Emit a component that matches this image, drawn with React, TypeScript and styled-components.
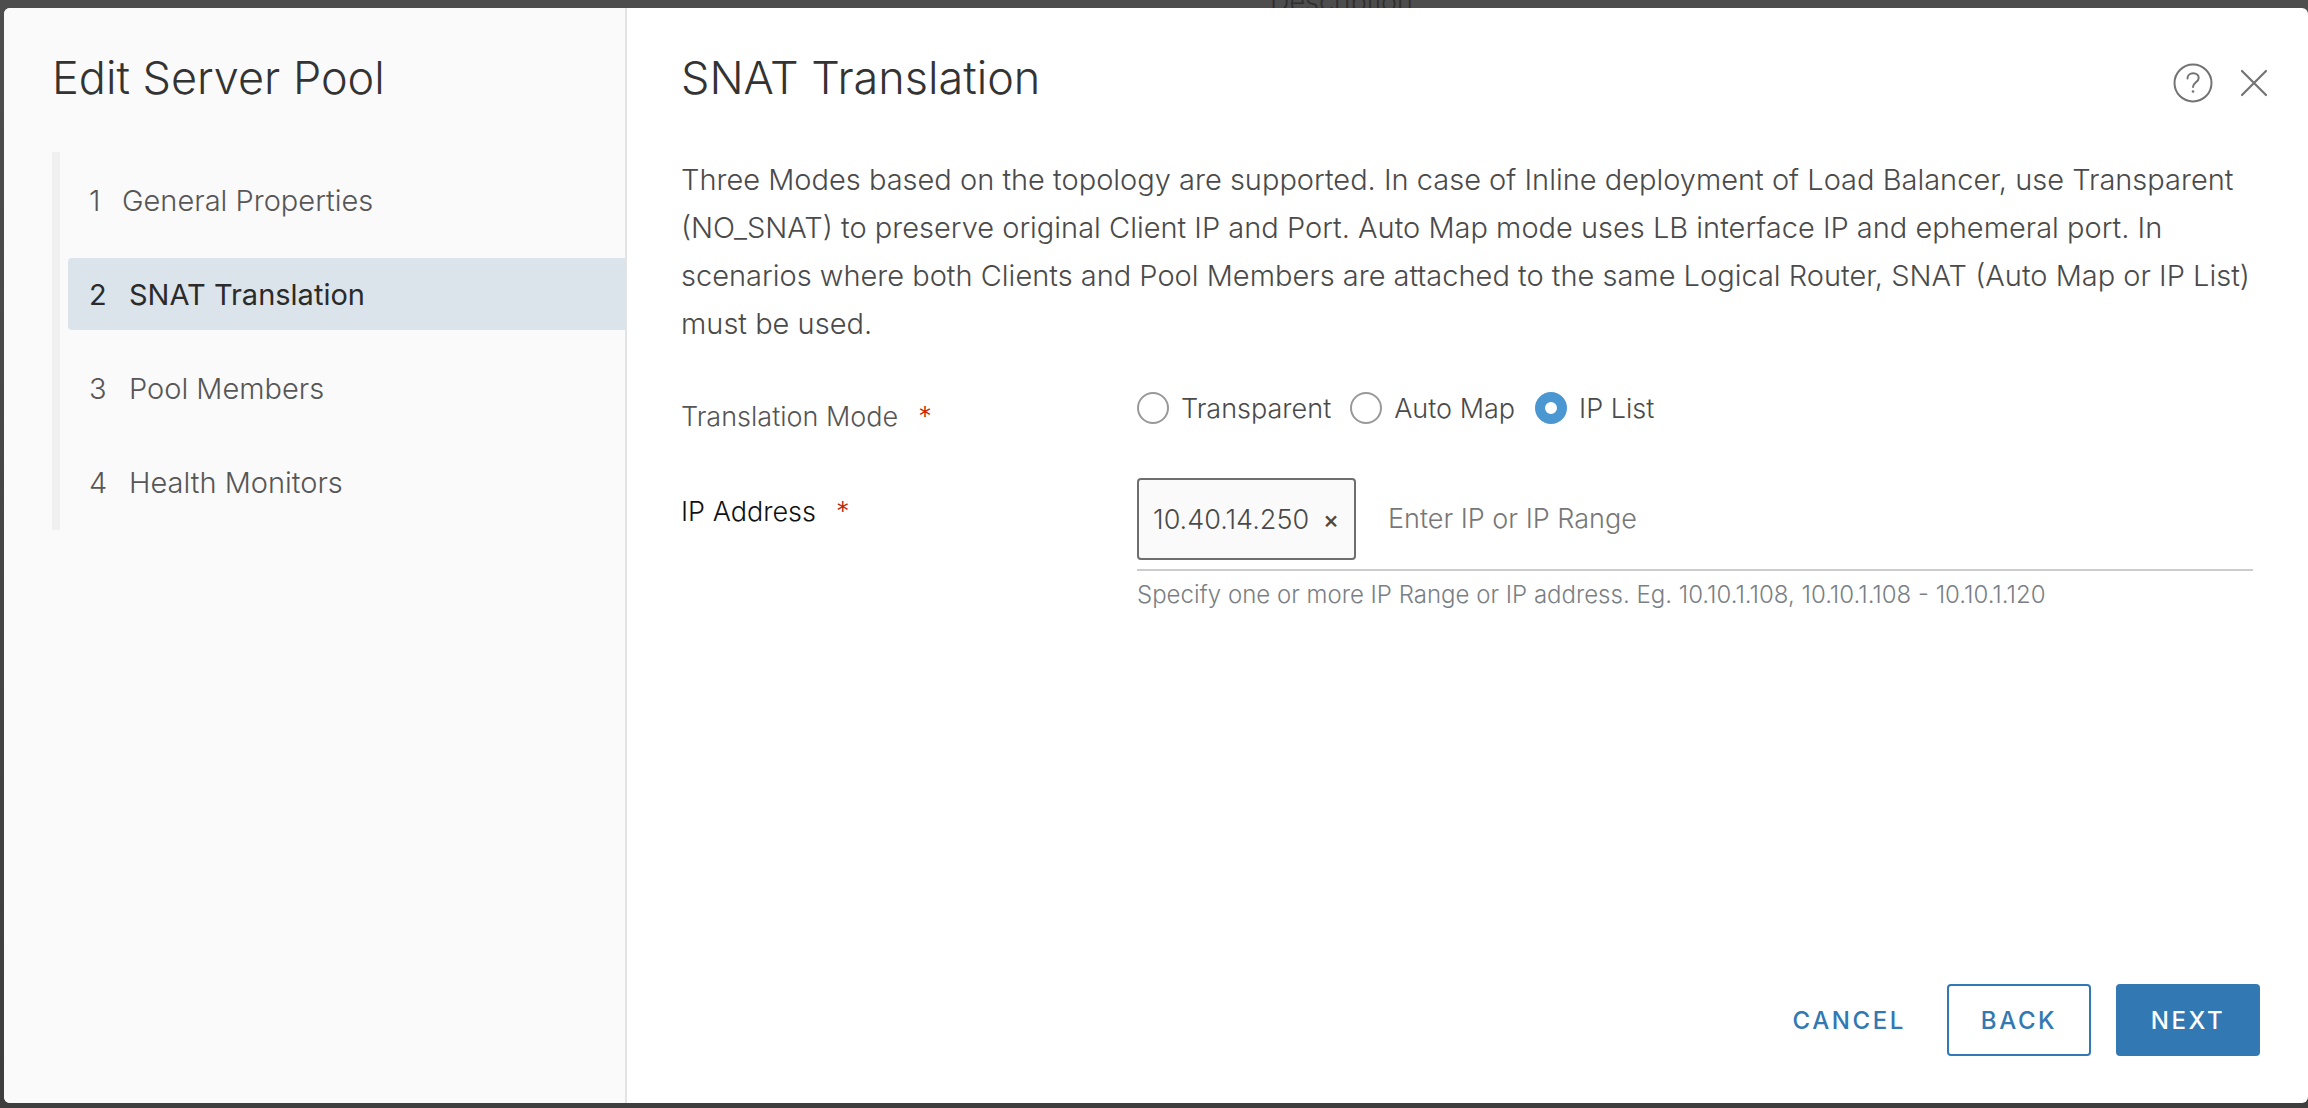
import styled, { createGlobalStyle } from 'styled-components';

const GlobalStyle = createGlobalStyle`
  html, body {
    margin: 0;
    padding: 0;
    height: 1108px;
    overflow: hidden;
    background: #444;
    font-family: Inter, "Liberation Sans", sans-serif;
  }
`;

const Backdrop = styled.div`
  position: relative;
  box-sizing: border-box;
  height: 1108px;
  padding: 8px 0 5px 4px;
  display: flex;
  background: linear-gradient(#4d4d4d, #3e3e3e);
  overflow: hidden;
`;

const GhostLabel = styled.span`
  position: absolute;
  left: 1270px;
  top: -15px;
  font-size: 27px;
  font-weight: 300;
  color: #2f2f2f;
`;

const Dialog = styled.div`
  position: relative;
  flex: 1;
  display: flex;
  background: #fff;
  border-radius: 6px;
  overflow: hidden;
`;

const Sidebar = styled.aside`
  flex: 0 0 623px;
  box-sizing: border-box;
  background: #fafafa;
  border-right: 2px solid #e3e3e3;
  padding: 46px 0 0 48px;
`;

const DialogTitle = styled.h1`
  margin: 0 0 50px;
  font-size: 45px;
  line-height: 48px;
  font-weight: 300;
  color: #333;
`;

const StepList = styled.ol`
  list-style: none;
  margin: 0;
  padding: 12px 0;
  border-left: 8px solid #f0f0f0;
  display: flex;
  flex-direction: column;
  gap: 22px;
`;

const Step = styled.li<{ $active?: boolean }>`
  height: 72px;
  margin-left: 8px;
  padding-left: 21px;
  display: flex;
  align-items: center;
  font-size: 29px;
  font-weight: ${(p) => (p.$active ? 400 : 300)};
  color: ${(p) => (p.$active ? '#2b2b2b' : '#565656')};
  background: ${(p) => (p.$active ? '#dbe4ea' : 'transparent')};
  border-radius: 4px 0 0 4px;
`;

const StepNumber = styled.span<{ $narrow?: boolean }>`
  width: ${(p) => (p.$narrow ? 33 : 40)}px;
`;

const Main = styled.main`
  flex: 1;
  display: flex;
  flex-direction: column;
  padding: 46px 48px 47px 54px;
  min-width: 0;
`;

const HeaderRow = styled.header`
  display: flex;
  align-items: flex-start;
  justify-content: space-between;
`;

const Heading = styled.h2`
  margin: 0;
  font-size: 45px;
  line-height: 48px;
  font-weight: 300;
  color: #333;
`;

const HeaderIcons = styled.div`
  display: flex;
  align-items: center;
  gap: 27px;
  margin: 9px -8px 0 0;
`;

const Description = styled.p`
  margin: 53px 0 0;
  font-size: 29px;
  line-height: 48px;
  font-weight: 300;
  color: #4a4a4a;
  width: 1572px;
`;

const FormRow = styled.div`
  display: grid;
  grid-template-columns: 456px 1116px;
`;

const ModeRow = styled(FormRow)`
  margin-top: 44px;
`;

const AddressRow = styled(FormRow)`
  margin-top: 45px;
`;

const FieldLabel = styled.label<{ $strong?: boolean; $offset: number }>`
  padding-top: ${(p) => p.$offset}px;
  font-size: 27px;
  font-weight: 300;
  line-height: 32px;
  color: ${(p) => (p.$strong ? '#111' : '#555')};
`;

const Required = styled.span`
  margin-left: 20px;
  color: #c92100;
`;

const RadioGroup = styled.div`
  display: flex;
  align-items: center;
  height: 32px;
`;

const RadioOption = styled.span<{ $gap: number }>`
  display: inline-flex;
  align-items: center;
  gap: 12px;
  margin-right: ${(p) => p.$gap}px;
  font-size: 27px;
  font-weight: 300;
  color: #4a4a4a;
`;

const RadioDot = styled.span<{ $checked?: boolean }>`
  box-sizing: border-box;
  width: 32px;
  height: 32px;
  border-radius: 50%;
  background: #fff;
  border: ${(p) => (p.$checked ? '10px solid #4b97d1' : '2px solid #999')};
`;

const AddressField = styled.div`
  display: flex;
  align-items: flex-start;
  gap: 32px;
  height: 93px;
  box-sizing: border-box;
  border-bottom: 2px solid #ccc;
`;

const Chip = styled.div`
  box-sizing: border-box;
  width: 219px;
  height: 82px;
  padding-left: 14px;
  display: flex;
  align-items: center;
  gap: 14px;
  background: #fafafa;
  border: 2px solid #6e6e6e;
  border-radius: 4px;
  font-size: 27px;
  font-weight: 300;
  color: #4a4a4a;
`;

const ChipClose = styled.span`
  font-size: 24px;
  font-weight: 500;
`;

const Placeholder = styled.span`
  margin-top: 24px;
  font-size: 27px;
  font-weight: 300;
  line-height: 34px;
  color: #777;
`;

const HelperText = styled.div`
  margin-top: 10px;
  font-size: 24px;
  font-weight: 300;
  line-height: 28px;
  color: #7a7f85;
`;

const Footer = styled.footer`
  margin-top: auto;
  display: flex;
  align-items: center;
  justify-content: flex-end;
  gap: 25px;
`;

const ActionButton = styled.button<{ $kind: 'link' | 'outline' | 'solid' }>`
  box-sizing: border-box;
  width: ${(p) => (p.$kind === 'link' ? 'auto' : '144px')};
  height: 72px;
  padding: 0;
  margin-right: ${(p) => (p.$kind === 'link' ? '16px' : 0)};
  font-family: inherit;
  font-size: 24px;
  font-weight: 500;
  letter-spacing: 2.6px;
  border-radius: 4px;
  border: ${(p) => (p.$kind === 'link' ? 'none' : '2px solid #3278b2')};
  color: ${(p) => (p.$kind === 'solid' ? '#fff' : '#3278b2')};
  background: ${(p) => (p.$kind === 'solid' ? '#3278b2' : 'transparent')};
`;

const HelpIcon = () => (
  <svg width="40" height="40" viewBox="0 0 40 40" fill="none" stroke="#737373" strokeWidth="2" strokeLinecap="round">
    <circle cx="20" cy="20" r="18.5" />
    <path d="M14.5 15.5c0-3.2 2.5-5.2 5.7-5.2 3.100 0 5.500 1.900 5.500 4.700 0 4.400-5.700 4.300-5.700 9" />
    <circle cx="20" cy="28.500" r="1.300" fill="#737373" stroke="none" />
  </svg>
);

const CloseIcon = () => (
  <svg width="28" height="28" viewBox="0 0 28 28" fill="none" stroke="#737373" strokeWidth="2.200" strokeLinecap="round">
    <path d="M2 2l24 24M26 2L2 26" />
  </svg>
);

const steps = [
  { n: '1', label: 'General Properties', narrow: true },
  { n: '2', label: 'SNAT Translation', active: true },
  { n: '3', label: 'Pool Members' },
  { n: '4', label: 'Health Monitors' },
];

const App = () => (
  <>
    <GlobalStyle />
    <Backdrop>
      <GhostLabel>Description</GhostLabel>
      <Dialog>
        <Sidebar>
          <DialogTitle>Edit Server Pool</DialogTitle>
          <StepList>
            {steps.map((s) => (
              <Step key={s.n} $active={s.active}>
                <StepNumber $narrow={s.narrow}>{s.n}</StepNumber>
                {s.label}
              </Step>
            ))}
          </StepList>
        </Sidebar>
        <Main>
          <HeaderRow>
            <Heading>SNAT Translation</Heading>
            <HeaderIcons>
              <HelpIcon />
              <CloseIcon />
            </HeaderIcons>
          </HeaderRow>
          <Description>
            Three Modes based on the topology are supported. In case of Inline deployment of Load Balancer, use
            Transparent (NO_SNAT) to preserve original Client IP and Port. Auto Map mode uses LB interface IP and
            ephemeral port. In scenarios where both Clients and Pool Members are attached to the same Logical Router,
            SNAT (Auto Map or IP List) must be used.
          </Description>
          <ModeRow>
            <FieldLabel $offset={9}>
              Translation Mode<Required>*</Required>
            </FieldLabel>
            <RadioGroup>
              <RadioOption $gap={19}>
                <RadioDot />
                Transparent
              </RadioOption>
              <RadioOption $gap={20}>
                <RadioDot />
                Auto Map
              </RadioOption>
              <RadioOption $gap={0}>
                <RadioDot $checked />
                IP List
              </RadioOption>
            </RadioGroup>
          </ModeRow>
          <AddressRow>
            <FieldLabel $strong $offset={18}>
              IP Address<Required>*</Required>
            </FieldLabel>
            <div>
              <AddressField>
                <Chip>
                  10.40.14.250
                  <ChipClose>×</ChipClose>
                </Chip>
                <Placeholder>Enter IP or IP Range</Placeholder>
              </AddressField>
              <HelperText>Specify one or more IP Range or IP address. Eg. 10.10.1.108, 10.10.1.108 - 10.10.1.120</HelperText>
            </div>
          </AddressRow>
          <Footer>
            <ActionButton $kind="link">CANCEL</ActionButton>
            <ActionButton $kind="outline">BACK</ActionButton>
            <ActionButton $kind="solid">NEXT</ActionButton>
          </Footer>
        </Main>
      </Dialog>
    </Backdrop>
  </>
);

export default App;
